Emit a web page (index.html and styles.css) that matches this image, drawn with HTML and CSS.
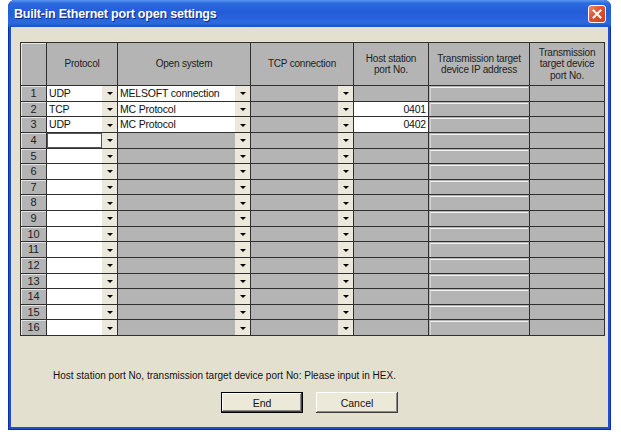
FILE: index.html
```html
<!DOCTYPE html>
<html>
<head>
<meta charset="utf-8">
<title>Built-in Ethernet port open settings</title>
<link rel="stylesheet" href="styles.css">
</head>
<body>
<div class="window">
  <div class="titlebar">
    <span class="title">Built-in Ethernet port open settings</span>
    <span class="close"><svg width="10" height="10" viewBox="0 0 10 10"><path d="M1.5 1.5 L8.5 8.5 M8.5 1.5 L1.5 8.5" stroke="#fff" stroke-width="2" stroke-linecap="square"/></svg></span>
  </div>
  <div class="client">
    <div class="grid">
      <div class="c corner"></div>
      <div class="c h">Protocol</div>
      <div class="c h">Open system</div>
      <div class="c h">TCP connection</div>
      <div class="c h">Host station<br>port No.</div>
      <div class="c h">Transmission target<br>device IP address</div>
      <div class="c h">Transmission<br>target device<br>port No.</div>

      <div class="c num">1</div>
      <div class="c dd w"><span class="v">UDP</span><i class="ar"><b></b></i></div>
      <div class="c dd w"><span class="v">MELSOFT connection</span><i class="ar"><b></b></i></div>
      <div class="c dd"><span class="v"></span><i class="ar"><b></b></i></div>
      <div class="c host"></div>
      <div class="c ip"><span></span></div>
      <div class="c"></div>

      <div class="c num">2</div>
      <div class="c dd w"><span class="v">TCP</span><i class="ar"><b></b></i></div>
      <div class="c dd w"><span class="v">MC Protocol</span><i class="ar"><b></b></i></div>
      <div class="c dd"><span class="v"></span><i class="ar"><b></b></i></div>
      <div class="c host w">0401</div>
      <div class="c ip"><span></span></div>
      <div class="c"></div>

      <div class="c num">3</div>
      <div class="c dd w"><span class="v">UDP</span><i class="ar"><b></b></i></div>
      <div class="c dd w"><span class="v">MC Protocol</span><i class="ar"><b></b></i></div>
      <div class="c dd"><span class="v"></span><i class="ar"><b></b></i></div>
      <div class="c host w">0402</div>
      <div class="c ip"><span></span></div>
      <div class="c"></div>

      <div class="c num">4</div>
      <div class="c dd w focus"><span class="v"></span><i class="ar"><b></b></i></div>
      <div class="c dd"><span class="v"></span><i class="ar"><b></b></i></div>
      <div class="c dd"><span class="v"></span><i class="ar"><b></b></i></div>
      <div class="c host"></div>
      <div class="c ip"><span></span></div>
      <div class="c"></div>

      <div class="c num">5</div>
      <div class="c dd w"><span class="v"></span><i class="ar"><b></b></i></div>
      <div class="c dd"><span class="v"></span><i class="ar"><b></b></i></div>
      <div class="c dd"><span class="v"></span><i class="ar"><b></b></i></div>
      <div class="c host"></div>
      <div class="c ip"><span></span></div>
      <div class="c"></div>

      <div class="c num">6</div>
      <div class="c dd w"><span class="v"></span><i class="ar"><b></b></i></div>
      <div class="c dd"><span class="v"></span><i class="ar"><b></b></i></div>
      <div class="c dd"><span class="v"></span><i class="ar"><b></b></i></div>
      <div class="c host"></div>
      <div class="c ip"><span></span></div>
      <div class="c"></div>

      <div class="c num">7</div>
      <div class="c dd w"><span class="v"></span><i class="ar"><b></b></i></div>
      <div class="c dd"><span class="v"></span><i class="ar"><b></b></i></div>
      <div class="c dd"><span class="v"></span><i class="ar"><b></b></i></div>
      <div class="c host"></div>
      <div class="c ip"><span></span></div>
      <div class="c"></div>

      <div class="c num">8</div>
      <div class="c dd w"><span class="v"></span><i class="ar"><b></b></i></div>
      <div class="c dd"><span class="v"></span><i class="ar"><b></b></i></div>
      <div class="c dd"><span class="v"></span><i class="ar"><b></b></i></div>
      <div class="c host"></div>
      <div class="c ip"><span></span></div>
      <div class="c"></div>

      <div class="c num">9</div>
      <div class="c dd w"><span class="v"></span><i class="ar"><b></b></i></div>
      <div class="c dd"><span class="v"></span><i class="ar"><b></b></i></div>
      <div class="c dd"><span class="v"></span><i class="ar"><b></b></i></div>
      <div class="c host"></div>
      <div class="c ip"><span></span></div>
      <div class="c"></div>

      <div class="c num">10</div>
      <div class="c dd w"><span class="v"></span><i class="ar"><b></b></i></div>
      <div class="c dd"><span class="v"></span><i class="ar"><b></b></i></div>
      <div class="c dd"><span class="v"></span><i class="ar"><b></b></i></div>
      <div class="c host"></div>
      <div class="c ip"><span></span></div>
      <div class="c"></div>

      <div class="c num">11</div>
      <div class="c dd w"><span class="v"></span><i class="ar"><b></b></i></div>
      <div class="c dd"><span class="v"></span><i class="ar"><b></b></i></div>
      <div class="c dd"><span class="v"></span><i class="ar"><b></b></i></div>
      <div class="c host"></div>
      <div class="c ip"><span></span></div>
      <div class="c"></div>

      <div class="c num">12</div>
      <div class="c dd w"><span class="v"></span><i class="ar"><b></b></i></div>
      <div class="c dd"><span class="v"></span><i class="ar"><b></b></i></div>
      <div class="c dd"><span class="v"></span><i class="ar"><b></b></i></div>
      <div class="c host"></div>
      <div class="c ip"><span></span></div>
      <div class="c"></div>

      <div class="c num">13</div>
      <div class="c dd w"><span class="v"></span><i class="ar"><b></b></i></div>
      <div class="c dd"><span class="v"></span><i class="ar"><b></b></i></div>
      <div class="c dd"><span class="v"></span><i class="ar"><b></b></i></div>
      <div class="c host"></div>
      <div class="c ip"><span></span></div>
      <div class="c"></div>

      <div class="c num">14</div>
      <div class="c dd w"><span class="v"></span><i class="ar"><b></b></i></div>
      <div class="c dd"><span class="v"></span><i class="ar"><b></b></i></div>
      <div class="c dd"><span class="v"></span><i class="ar"><b></b></i></div>
      <div class="c host"></div>
      <div class="c ip"><span></span></div>
      <div class="c"></div>

      <div class="c num">15</div>
      <div class="c dd w"><span class="v"></span><i class="ar"><b></b></i></div>
      <div class="c dd"><span class="v"></span><i class="ar"><b></b></i></div>
      <div class="c dd"><span class="v"></span><i class="ar"><b></b></i></div>
      <div class="c host"></div>
      <div class="c ip"><span></span></div>
      <div class="c"></div>

      <div class="c num">16</div>
      <div class="c dd w"><span class="v"></span><i class="ar"><b></b></i></div>
      <div class="c dd"><span class="v"></span><i class="ar"><b></b></i></div>
      <div class="c dd"><span class="v"></span><i class="ar"><b></b></i></div>
      <div class="c host"></div>
      <div class="c ip"><span></span></div>
      <div class="c"></div>
    </div>
    <p class="note">Host station port No, transmission target device port No: Please input in HEX.</p>
    <div class="buttons">
      <button class="btn default">End</button>
      <button class="btn">Cancel</button>
    </div>
  </div>
</div>
</body>
</html>
```

FILE: styles.css
```css
* { box-sizing: border-box; }

body {
  margin: 0;
  background: #ffffff;
  font-family: "Liberation Sans", Arial, sans-serif;
}

.window {
  margin-left: 8px;
  width: 603px;
  height: 430px;
  display: flex;
  flex-direction: column;
  background: #1f4fd0;
  border-radius: 7px 7px 0 0;
  box-shadow: inset 1px 0 #0b2f9e, inset -1px 0 #0b2f9e, inset 0 -1px #0b2f9e;
}

.titlebar {
  height: 27px;
  flex: none;
  display: flex;
  align-items: center;
  padding: 0 5px 0 6px;
  border-radius: 7px 7px 0 0;
  background: linear-gradient(to bottom, #5a97f2 0%, #2d6ade 12%, #245cd8 45%, #2c69df 85%, #1d4fc9 100%);
}

.title {
  flex: 1;
  color: #ffffff;
  font-weight: bold;
  font-size: 12.5px;
  letter-spacing: -0.2px;
  text-shadow: 1px 1px #0c2a84;
  padding-top: 1px;
}

.close {
  width: 18px;
  height: 18px;
  display: flex;
  align-items: center;
  justify-content: center;
  border: 1px solid #ffffff;
  border-radius: 3px;
  background: linear-gradient(135deg, #ef8a6a 0%, #e0522e 45%, #c9401f 100%);
}

.client {
  flex: 1;
  margin: 0 3px 3px 3px;
  background: #e4e0d0;
  padding-top: 15px;
  display: flex;
  flex-direction: column;
}

.grid {
  margin-left: 9px;
  width: 585px;
  display: grid;
  grid-template-columns: 26px 71px 133px 103px 75px 101px 75px;
  grid-template-rows: 43px repeat(16, 15.625px);
  border-left: 1px solid #303030;
  border-top: 1px solid #303030;
  font-size: 10px;
  letter-spacing: -0.2px;
  color: #111111;
}

.c {
  background: #b4b4b4;
  border-right: 1px solid #303030;
  border-bottom: 1px solid #303030;
  overflow: hidden;
  white-space: nowrap;
  line-height: 14px;
}

.corner {
  box-shadow: inset 1px 1px #e8e8e8;
}

.h {
  display: flex;
  align-items: center;
  justify-content: center;
  text-align: center;
  line-height: 11.5px;
  color: #222222;
}

.num {
  text-align: center;
  font-size: 11px;
  color: #222222;
  box-shadow: inset 1px 1px #e4e4e4;
}

.w { background: #ffffff; }

.dd { display: flex; }

.dd .v {
  flex: 1;
  padding-left: 2px;
  font-size: 10.5px;
}

.ar {
  width: 15px;
  flex: none;
  background: #ece9dc;
  display: flex;
  align-items: center;
  justify-content: center;
}

.ar b {
  width: 0;
  height: 0;
  border-left: 3px solid transparent;
  border-right: 3px solid transparent;
  border-top: 3px solid #000000;
  margin-top: 1px;
}

.focus .v {
  box-shadow: inset 0 0 0 1px #555555;
}

.host {
  text-align: right;
  padding-right: 2px;
  font-size: 10.5px;
}

.ip {
  padding: 1px 1px 0 1px;
}

.ip span {
  display: block;
  height: 100%;
  border-top: 1px solid #f2f2f2;
  border-left: 1px solid #d4d4d4;
}

.note {
  margin: 33px 0 0 42px;
  font-size: 10px;
  line-height: 13px;
  color: #111111;
}

.buttons {
  display: flex;
  justify-content: center;
  gap: 13px;
  margin-top: 10px;
}

.btn {
  width: 82px;
  height: 21px;
  font-family: "Liberation Sans", Arial, sans-serif;
  font-size: 10.5px;
  color: #111111;
  background: #ece9d8;
  border: none;
  padding: 0;
  box-shadow: inset -1px -1px #404040, inset 1px 1px #ffffff, inset -2px -2px #8a8a8a;
}

.btn.default {
  border: 1px solid #000000;
}
```
